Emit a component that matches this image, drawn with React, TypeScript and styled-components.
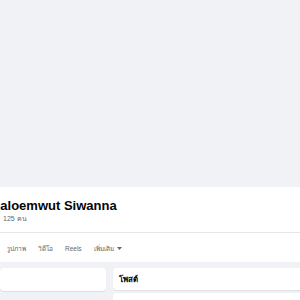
import styled, { createGlobalStyle } from "styled-components";

const GlobalStyle = createGlobalStyle`
  body {
    margin: 0;
    background: #f0f2f5;
    font-family: "Liberation Sans", "Noto Sans", sans-serif;
    color: #050505;
    overflow: hidden;
  }
`;

const Page = styled.div`
  width: 300px;
  height: 300px;
  overflow: hidden;
`;

const Cover = styled.div`
  height: 187px;
  background: #f0f2f5;
`;

const Header = styled.div`
  background: #ffffff;
  padding-top: 11px;
`;

const Identity = styled.div`
  margin-left: -17px;
  padding-bottom: 8px;
`;

const Name = styled.h1`
  margin: 0;
  font-size: 13px;
  line-height: 16px;
  font-weight: 700;
  white-space: nowrap;
`;

const Friends = styled.div`
  font-size: 7px;
  line-height: 10px;
  color: #65676b;
  white-space: nowrap;
  margin-left: 20px;
`;

const Divider = styled.div`
  height: 1px;
  background: #e4e6eb;
`;

const Tabs = styled.nav`
  display: flex;
  align-items: center;
  gap: 12px;
  height: 27px;
  padding: 2px 0 0 7px;
`;

const Tab = styled.span`
  display: flex;
  align-items: center;
  gap: 3px;
  font-size: 6.5px;
  color: #65676b;
  white-space: nowrap;
`;

const Main = styled.div`
  display: flex;
  gap: 7px;
  padding-top: 6px;
`;

const Side = styled.div`
  width: 106px;
  flex-shrink: 0;
`;

const Feed = styled.div`
  flex: 1;
  display: flex;
  flex-direction: column;
  gap: 3px;
  margin-right: -6px;
`;

const Card = styled.div<{ $h: number }>`
  background: #ffffff;
  border-radius: 4px;
  height: ${(p) => p.$h}px;
  box-shadow: 0 1px 1px rgba(0, 0, 0, 0.08);
  display: flex;
  align-items: center;
  padding: 0 6px;
`;

const CardTitle = styled.h2`
  margin: 0;
  font-size: 8px;
  font-weight: 700;
  color: #050505;
`;

const Caret = () => (
  <svg width="5" height="3" viewBox="0 0 10 6">
    <path d="M0 0h10L5 6z" fill="#65676b" />
  </svg>
);

export default function App() {
  return (
    <Page>
      <GlobalStyle />
      <Cover />
      <Header>
        <Identity>
          <Name>Chaloemwut Siwanna</Name>
          <Friends>125 คน</Friends>
        </Identity>
        <Divider />
        <Tabs>
          <Tab>รูปภาพ</Tab>
          <Tab>วิดีโอ</Tab>
          <Tab>Reels</Tab>
          <Tab>
            เพิ่มเติม <Caret />
          </Tab>
        </Tabs>
      </Header>
      <Main>
        <Side>
          <Card $h={23} />
        </Side>
        <Feed>
          <Card $h={22}>
            <CardTitle>โพสต์</CardTitle>
          </Card>
          <Card $h={40} />
        </Feed>
      </Main>
    </Page>
  );
}
